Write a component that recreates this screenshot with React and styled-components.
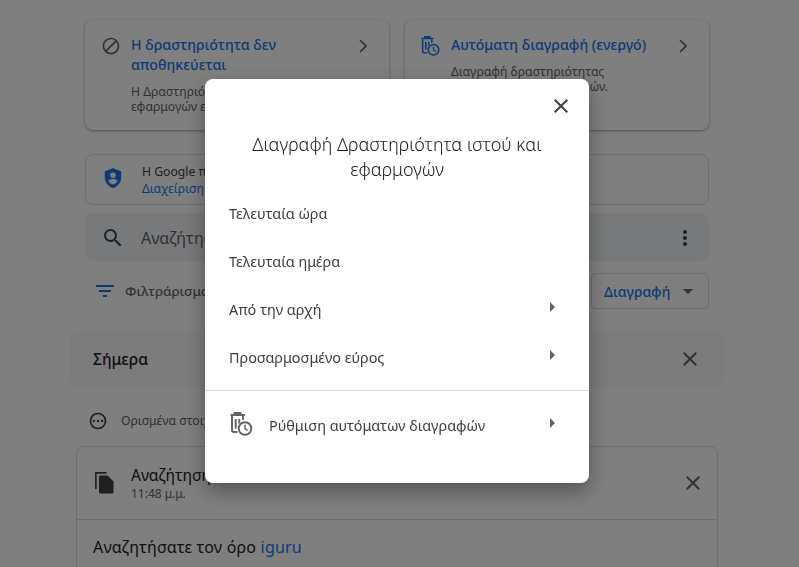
import React from "react";
import styled, { createGlobalStyle } from "styled-components";

const FONT = `"Noto Sans", "Open Sans", sans-serif`;

const GlobalStyle = createGlobalStyle`
  html, body {
    margin: 0;
    padding: 0;
    height: 100%;
    overflow: hidden;
    background: #fff;
    font-family: ${FONT};
  }
  * { box-sizing: border-box; }
`;

const Page = styled.main`
  width: 799px;
  height: 567px;
  overflow: hidden;
  padding-top: 20px;
`;

const Column = styled.div`
  width: 624px;
  margin-left: 85px;
`;

const TopCards = styled.div`
  display: grid;
  grid-template-columns: 304px 304px;
  gap: 16px;
`;

const TopCard = styled.section`
  height: 110px;
  display: grid;
  grid-template-columns: 24px 1fr 24px;
  column-gap: 8px;
  padding: 15px 14px 0 14px;
  border-radius: 8px;
  background: #fff;
  box-shadow: 0 1px 3px rgba(60, 64, 67, 0.5);

  > svg:first-child {
    justify-self: center;
    margin-top: 1px;
  }
  > svg:last-child {
    margin-top: -1px;
  }
`;

const CardTitle = styled.h3`
  margin: 0;
  font-size: 14.2px;
  line-height: 20px;
  font-weight: 500;
  color: #1a73e8;
`;

const CardText = styled.p`
  margin: 9px 0 0;
  font-size: 12.2px;
  line-height: 15px;
  color: #5f6368;
`;

const Notice = styled.section`
  height: 51px;
  margin-top: 24px;
  display: flex;
  align-items: center;
  gap: 13px;
  padding-left: 16px;
  border: 1px solid #dadce0;
  border-radius: 8px;
  font-size: 12.2px;
  line-height: 17px;
  color: #3c4043;

  > svg {
    margin: -4px 5px 0 0;
  }
`;

const Link = styled.span`
  color: #1a73e8;
`;

const SearchBar = styled.div`
  height: 48px;
  margin-top: 8px;
  display: flex;
  align-items: center;
  gap: 16px;
  padding: 1px 12px 0 16px;
  border-radius: 8px;
  background: #f1f3f4;
  font-size: 16px;
  color: #5f6368;
`;

const Grow = styled.span`
  flex: 1;
`;

const FilterRow = styled.div`
  height: 36px;
  margin-top: 12px;
  display: flex;
  align-items: center;
  justify-content: space-between;
  padding-left: 8px;
`;

const FilterLabel = styled.div`
  display: flex;
  align-items: center;
  gap: 8px;
  font-size: 13.4px;
  font-weight: 500;
  color: #5f6368;
`;

const DeleteButton = styled.div`
  width: 118px;
  height: 36px;
  display: flex;
  align-items: center;
  justify-content: space-between;
  padding: 0 8px 0 12px;
  border: 1px solid #dadce0;
  border-radius: 4px;
  font-size: 14px;
  font-weight: 500;
  color: #1a73e8;
`;

const DayBand = styled.div`
  width: 655px;
  height: 56px;
  margin: 22px 0 0 70px;
  display: flex;
  align-items: center;
  justify-content: space-between;
  padding: 0 23px;
  border-radius: 8px;
  background: #f8f9fa;
  font-size: 15.6px;
  font-weight: 500;
  color: #202124;
`;

const InfoRow = styled.div`
  margin: 24px 0 0 88px;
  display: flex;
  align-items: center;
  gap: 13px;
  font-size: 12.2px;
  line-height: 20px;
  color: #5f6368;
`;

const ActivityCard = styled.section`
  width: 642px;
  height: 160px;
  margin: 15px 0 0 76px;
  border: 1px solid #dadce0;
  border-radius: 8px;
`;

const ActivityHead = styled.div`
  height: 73px;
  display: flex;
  align-items: center;
  gap: 15px;
  padding: 0 12px 0 15px;
  border-bottom: 1px solid #dadce0;
`;

const ActivityTitle = styled.div`
  font-size: 15.6px;
  line-height: 20px;
  color: #202124;
`;

const ActivityTime = styled.div`
  font-size: 12px;
  line-height: 16px;
  margin-top: 1px;
  color: #5f6368;
`;

const ActivityBody = styled.div`
  padding: 16px;
  font-size: 16px;
  line-height: 22px;
  letter-spacing: 0.2px;
  color: #202124;
`;

const Scrim = styled.div`
  position: fixed;
  inset: 0;
  background: rgba(0, 0, 0, 0.5);
`;

const Dialog = styled.div`
  position: fixed;
  left: 205px;
  top: 79px;
  width: 384px;
  height: 404px;
  border-radius: 8px;
  background: #fff;
  box-shadow: 0 8px 20px rgba(0, 0, 0, 0.35);
`;

const DialogTop = styled.div`
  display: flex;
  justify-content: flex-end;
  padding: 15px 16px 0 0;
`;

const DialogTitle = styled.h2`
  margin: 14px 24px 0;
  font-size: 18px;
  line-height: 25px;
  font-weight: 300;
  text-align: center;
  color: #202124;
`;

const Menu = styled.div`
  margin-top: 7px;
  padding-bottom: 9px;
  border-bottom: 1px solid #dadce0;
`;

const MenuItem = styled.div`
  height: 48px;
  display: flex;
  align-items: center;
  justify-content: space-between;
  padding: 0 25px 0 24px;
  font-size: 14.4px;
  color: #3c4043;
`;

const AutoRow = styled.div`
  height: 68px;
  display: flex;
  align-items: center;
  gap: 15px;
  padding: 0 25px;
  font-size: 14.4px;
  color: #3c4043;

  > svg:first-child {
    margin-top: -2px;
  }
`;

const Svg = styled.svg`
  flex: none;
  display: block;
  fill: ${(props) => props.$color || "#5f6368"};
`;

const Icon = ({ size = 24, color, children, ...rest }) => (
  <Svg width={size} height={size} viewBox="0 0 24 24" $color={color} {...rest}>
    {children}
  </Svg>
);

const Close = ({ color, size }) => (
  <Icon color={color} size={size}>
    <path d="M19 6.41L17.59 5 12 10.59 6.41 5 5 6.41 10.59 12 5 17.59 6.41 19 12 13.41 17.59 19 19 17.59 13.41 12z" />
  </Icon>
);

const Chevron = () => (
  <Icon>
    <path d="M9 6l6 6-6 6" fill="none" stroke="#5f6368" strokeWidth="1.7" />
  </Icon>
);

const ArrowRight = () => (
  <Icon color="#5f6368" style={{ marginTop: -4 }}>
    <path d="M10 17l5-5-5-5v10z" />
  </Icon>
);

const AutoDelete = ({ color, size }) => (
  <Icon size={size}>
    <g fill="none" stroke={color} strokeWidth="1.9">
      <path d="M.5 3h14.5M4.5 3V1h6v2" />
      <path d="M2 4v14.5c0 .8.7 1.5 1.5 1.5H7.5M13 4v4" />
      <path d="M5.7 7v9.5M9.3 7v4.5" />
      <circle cx="15" cy="16.5" r="6.3" />
      <path d="M15 12.8v3.9l2.6 1.6" strokeWidth="1.5" />
    </g>
  </Icon>
);

const App = () => (
  <>
    <GlobalStyle />
    <Page>
      <Column>
        <TopCards>
          <TopCard>
            <Icon size={20}>
              <path d="M12 2C6.48 2 2 6.48 2 12s4.48 10 10 10 10-4.48 10-10S17.52 2 12 2zM4 12c0-4.42 3.58-8 8-8 1.85 0 3.55.63 4.9 1.69L5.69 16.9C4.63 15.55 4 13.85 4 12zm8 8c-1.85 0-3.55-.63-4.9-1.69L18.31 7.1C19.37 8.45 20 10.15 20 12c0 4.42-3.58 8-8 8z" />
            </Icon>
            <div>
              <CardTitle>Η δραστηριότητα δεν αποθηκεύεται</CardTitle>
              <CardText>
                Η Δραστηριότητα ιστού και
                <br />
                εφαρμογών είναι ανενεργή
              </CardText>
            </div>
            <Chevron />
          </TopCard>
          <TopCard>
            <AutoDelete color="#1a73e8" size={20} />
            <div>
              <CardTitle>Αυτόματη διαγραφή (ενεργό)</CardTitle>
              <CardText>
                Διαγραφή δραστηριότητας
                <br />
                παλαιότερης των 18 μηνών.
              </CardText>
            </div>
            <Chevron />
          </TopCard>
        </TopCards>

        <Notice>
          <Icon color="#1a73e8" size={22}>
            <path d="M12 1L3 5v6c0 5.55 3.84 10.74 9 12 5.16-1.26 9-6.45 9-12V5l-9-4zm0 5a3 3 0 1 1 0 6 3 3 0 0 1 0-6zm0 13.2c-2.2-.6-4-2-5-3.7 0-1.7 3.3-2.5 5-2.5s5 .8 5 2.5c-1 1.7-2.8 3.1-5 3.7z" />
          </Icon>
          <div>
            Η Google προστατεύει
            <br />
            <Link>Διαχείριση δραστηριότητας</Link>
          </div>
        </Notice>

        <SearchBar>
          <Icon color="#3c4043">
            <path d="M15.5 14h-.79l-.28-.27A6.47 6.47 0 0 0 16 9.5 6.5 6.5 0 1 0 9.5 16c1.61 0 3.09-.59 4.23-1.57l.27.28v.79l5 4.99L20.49 19l-4.99-5zm-6 0C7.01 14 5 11.99 5 9.5S7.01 5 9.5 5 14 7.01 14 9.5 11.99 14 9.5 14z" />
          </Icon>
          <Grow>Αναζήτηση</Grow>
          <Icon color="#3c4043">
            <path d="M12 8c1.1 0 2-.9 2-2s-.9-2-2-2-2 .9-2 2 .9 2 2 2zm0 2c-1.1 0-2 .9-2 2s.9 2 2 2 2-.9 2-2-.9-2-2-2zm0 6c-1.1 0-2 .9-2 2s.9 2 2 2 2-.9 2-2-.9-2-2-2z" />
          </Icon>
        </SearchBar>

        <FilterRow>
          <FilterLabel>
            <Icon color="#1a73e8">
              <path d="M10 18h4v-2h-4v2zM3 6v2h18V6H3zm3 7h12v-2H6v2z" />
            </Icon>
            Φιλτράρισμα κατά
          </FilterLabel>
          <DeleteButton>
            Διαγραφή
            <Icon>
              <path d="M7 10l5 5 5-5z" />
            </Icon>
          </DeleteButton>
        </FilterRow>
      </Column>

      <DayBand>
        Σήμερα
        <Close color="#5f6368" />
      </DayBand>

      <InfoRow>
        <Icon size={20} color="#3c4043">
          <path d="M12 2a10 10 0 1 0 0 20 10 10 0 0 0 0-20zm0 18a8 8 0 1 1 0-16 8 8 0 0 1 0 16zM7 10.6a1.4 1.4 0 1 0 0 2.8 1.4 1.4 0 0 0 0-2.8zm5 0a1.4 1.4 0 1 0 0 2.8 1.4 1.4 0 0 0 0-2.8zm5 0a1.4 1.4 0 1 0 0 2.8 1.4 1.4 0 0 0 0-2.8z" />
        </Icon>
        Ορισμένα στοιχεία
      </InfoRow>

      <ActivityCard>
        <ActivityHead>
          <Icon color="#3c4043">
            <path d="M3 1h11.5v1.7H4.7V18H3z" />
            <path d="M8 4.5h7.5l6 6v11a1 1 0 0 1-1 1H8a1 1 0 0 1-1-1v-16a1 1 0 0 1 1-1z" />
          </Icon>
          <Grow>
            <ActivityTitle>Αναζήτηση</ActivityTitle>
            <ActivityTime>11:48 μ.μ.</ActivityTime>
          </Grow>
          <Close color="#5f6368" />
        </ActivityHead>
        <ActivityBody>
          Αναζητήσατε τον όρο <Link>iguru</Link>
        </ActivityBody>
      </ActivityCard>
    </Page>

    <Scrim />
    <Dialog>
      <DialogTop>
        <Close color="#3c4043" />
      </DialogTop>
      <DialogTitle>Διαγραφή Δραστηριότητα ιστού και εφαρμογών</DialogTitle>
      <Menu>
        <MenuItem>Τελευταία ώρα</MenuItem>
        <MenuItem>Τελευταία ημέρα</MenuItem>
        <MenuItem>
          Από την αρχή
          <ArrowRight />
        </MenuItem>
        <MenuItem>
          Προσαρμοσμένο εύρος
          <ArrowRight />
        </MenuItem>
      </Menu>
      <AutoRow>
        <AutoDelete color="#5f6368" />
        <Grow>Ρύθμιση αυτόματων διαγραφών</Grow>
        <ArrowRight />
      </AutoRow>
    </Dialog>
  </>
);

export default App;
